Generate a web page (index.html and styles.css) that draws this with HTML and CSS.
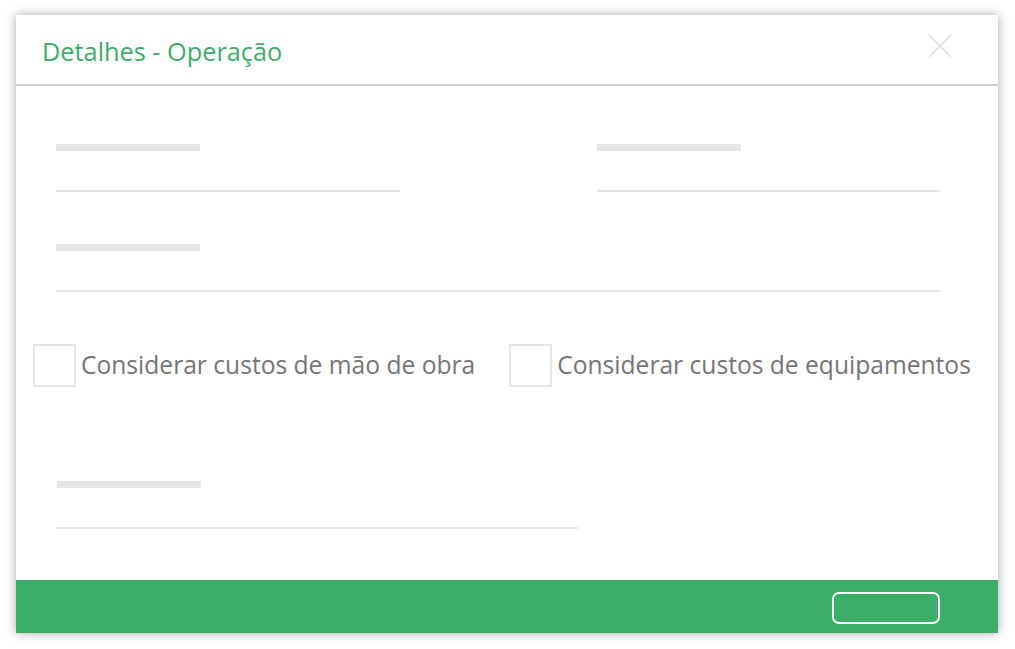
FILE: index.html
```html
<!DOCTYPE html>
<html lang="pt">
<head>
  <meta charset="UTF-8" />
  <title>Detalhes - Operação</title>
  <link rel="stylesheet" href="styles.css">
</head>
<body>

  <div class="dialog">

    <!-- ───── header ───── -->
    <div class="dialog-header">
      <h1 class="dialog-title">Detalhes - Operação</h1>
      <button class="close-btn" aria-label="Fechar">
        <svg width="24" height="24" viewBox="0 0 24 24">
          <path d="M1 1 L23 23 M23 1 L1 23" stroke="#dedede" stroke-width="1.6" fill="none" />
        </svg>
      </button>
    </div>

    <!-- ───── body ───── -->
    <div class="dialog-body">
      <div class="row row-split">
        <div class="field field-half">
          <span class="field-label"></span>
          <span class="field-line"></span>
        </div>
        <div class="field field-half">
          <span class="field-label"></span>
          <span class="field-line"></span>
        </div>
      </div>

      <div class="row">
        <div class="field">
          <span class="field-label"></span>
          <span class="field-line"></span>
        </div>
      </div>

      <div class="checks">
        <label class="check">
          <span class="check-box"></span>
          <span class="check-text">Considerar custos de mão de obra</span>
        </label>
        <label class="check">
          <span class="check-box"></span>
          <span class="check-text">Considerar custos de equipamentos</span>
        </label>
      </div>

      <div class="row row-last">
        <div class="field field-wide">
          <span class="field-label"></span>
          <span class="field-line"></span>
        </div>
      </div>
    </div>

    <!-- ───── footer ───── -->
    <div class="dialog-footer">
      <button class="footer-btn"></button>
    </div>
  </div>

</body>
</html>
```

FILE: styles.css
```css
:root {
  --c-green:   #3bae68;
  --c-text:    #767676;
  --c-skel:    #e6e6e6;
  --c-divider: #cfcfcf;

  --font-base: 'Open Sans', 'Noto Sans', sans-serif;
}

/* ───── base layout ───── */
html, body {
  margin: 0;
  padding: 0;
  background: #fff;
}

body {
  font-family: var(--font-base);
  padding: 15px 17px 16px 16px;
}

.dialog {
  width: 982px;
  height: 618px;
  display: flex;
  flex-direction: column;
  overflow: hidden;
  background: #fff;
  box-shadow: 0 0 10px rgba(0, 0, 0, 0.35);
}

/* ───── header ───── */
.dialog-header {
  height: 69px;
  display: flex;
  align-items: center;
  justify-content: space-between;
  padding: 0 46px 0 26px;
  border-bottom: 2px solid var(--c-divider);
  flex-shrink: 0;
}

.dialog-title {
  margin: 0 0 -3px;
  font-size: 25.3px;
  font-weight: 400;
  color: var(--c-green);
  white-space: nowrap;
}

.close-btn {
  width: 24px;
  height: 24px;
  padding: 0;
  margin-top: -8px;
  border: none;
  background: none;
  cursor: pointer;
}
.close-btn svg { display: block; }

/* ───── skeleton fields ───── */
.dialog-body {
  flex: 1;
  min-height: 0;
  padding: 58px 58px 0 40px;
}

.row { margin-bottom: 52px; }

.row-split {
  display: grid;
  grid-template-columns: 344px 343px;
  column-gap: 197px;
}

.field {
  display: flex;
  flex-direction: column;
}

.field-label {
  width: 144px;
  height: 7px;
  background: var(--c-skel);
}

.field-line {
  height: 2px;
  margin-top: 39px;
  background: var(--c-skel);
}

.field-wide {
  width: 521px;
  margin-left: 1px;
}

/* ───── checkboxes ───── */
.checks {
  display: flex;
  gap: 34px;
  margin: 0 0 94px -23px;
}

.check {
  display: flex;
  align-items: center;
  gap: 5px;
  cursor: pointer;
}

.check-box {
  width: 39px;
  height: 39px;
  border: 2px solid var(--c-skel);
  flex-shrink: 0;
}

.check-text {
  font-size: 24.6px;
  line-height: 1.2;
  color: var(--c-text);
  white-space: nowrap;
  margin-top: -2px;
}

/* ───── footer ───── */
.dialog-footer {
  height: 53px;
  display: flex;
  align-items: center;
  justify-content: flex-end;
  padding-right: 58px;
  background: var(--c-green);
  flex-shrink: 0;
}

.footer-btn {
  width: 108px;
  height: 32px;
  margin-top: 3px;
  background: transparent;
  border: 2px solid #fff;
  border-radius: 7px;
  cursor: pointer;
}
```
